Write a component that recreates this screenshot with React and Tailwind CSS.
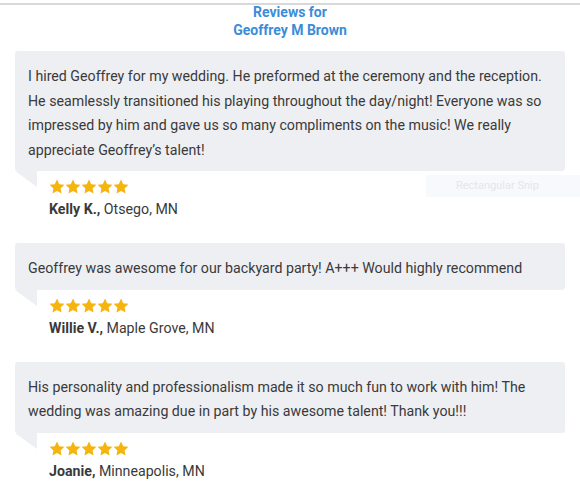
import React from "react";

const reviews = [
  {
    text: "I hired Geoffrey for my wedding. He preformed at the ceremony and the reception. He seamlessly transitioned his playing throughout the day/night! Everyone was so impressed by him and gave us so many compliments on the music! We really appreciate Geoffrey\u2019s talent!",
    name: "Kelly K.,",
    place: " Otsego, MN",
  },
  {
    text: "Geoffrey was awesome for our backyard party! A+++ Would highly recommend",
    name: "Willie V.,",
    place: " Maple Grove, MN",
  },
  {
    text: "His personality and professionalism made it so much fun to work with him! The wedding was amazing due in part by his awesome talent! Thank you!!!",
    name: "Joanie,",
    place: " Minneapolis, MN",
  },
];

function Star() {
  return (
    <svg width="16" height="15" viewBox="0 0 24 23" className="block">
      <path
        d="M12 0.8l3.4 7.2 7.9 1-5.8 5.4 1.5 7.8L12 18.4l-7 3.8 1.5-7.8L0.7 9l7.9-1z"
        fill="#f6b40e"
      />
    </svg>
  );
}

function Review({ r, first }) {
  return (
    <div className="relative">
      <div className="bg-[#eeeff2] rounded-[3px] px-[13px] pt-[13px] pb-[9px] text-[14.2px] leading-[24.5px] text-[#3a3a3a]">
        {r.text}
      </div>
      <div className="flex">
        <svg width="22" height="16" viewBox="0 0 22 16" className="block shrink-0">
          <polygon points="0,0 22,0 22,16" fill="#eeeff2" />
        </svg>
        <div className="pl-[12px] pt-[8px]">
          <div className="flex gap-0">
            <Star />
            <Star />
            <Star />
            <Star />
            <Star />
          </div>
          <div className="text-[14.2px] leading-[20px] mt-[5px] text-[#3a3a3a]">
            <span className="font-bold">{r.name}</span>
            {r.place}
          </div>
        </div>
      </div>
      {first && (
        <div className="absolute right-[-15px] top-[124px] w-[154px] h-[22px] bg-[#f8f9fc] flex items-center pl-[30px] text-[11px] text-[#e4e6ea]">
          Rectangular Snip
        </div>
      )}
    </div>
  );
}

export default function App() {
  return (
    <div
      className="w-[580px] h-[492px] bg-white overflow-hidden"
      style={{ fontFamily: "Roboto, sans-serif" }}
    >
      <div className="h-[3px]" />
      <div className="h-[2px] bg-[#d9d9d9]" />
      <div className="text-center text-[#3b8dd8] font-bold text-[14px] leading-[18px] -mt-[2px]">
        <div>Reviews for</div>
        <div>Geoffrey M Brown</div>
      </div>
      <div className="pl-[15px] pr-[15px] pt-[12px] flex flex-col gap-[24px]">
        {reviews.map((r, i) => (
          <Review key={i} r={r} first={i === 0} />
        ))}
      </div>
    </div>
  );
}
